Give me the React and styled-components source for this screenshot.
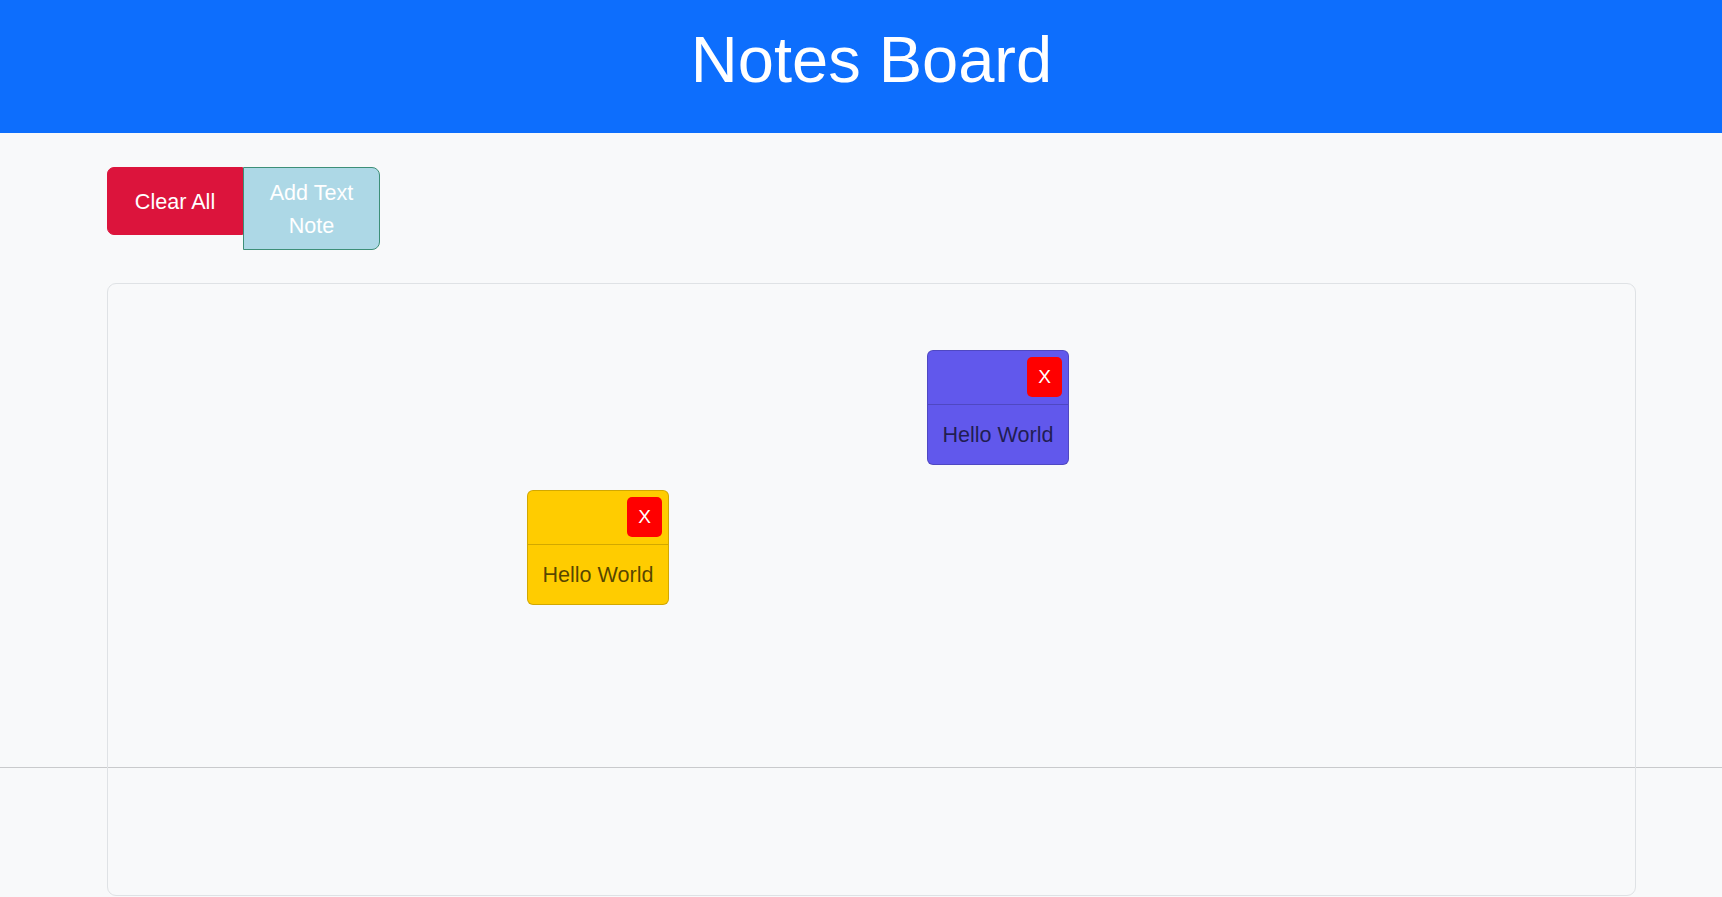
import React from "react";
import styled, { createGlobalStyle } from "styled-components";

const GlobalStyle = createGlobalStyle`
  html {
    overflow: hidden;
  }
  html, body {
    margin: 0;
    padding: 0;
    background: #f8f9fa;
    font-family: "Liberation Sans", Arial, sans-serif;
    color: #212529;
  }
  * { box-sizing: border-box; }
`;

const Header = styled.header`
  height: 133px;
  background: #0d6efd;
  padding: 22px 0 0 21px;
  text-align: center;
`;

const Title = styled.h1`
  margin: 0;
  font-size: 65px;
  line-height: 76.8px;
  font-weight: 400;
  color: #ffffff;
`;

const Main = styled.main`
  position: relative;
  z-index: 1;
  height: 634px;
  padding: 34px 0 0 107px;
`;

const Toolbar = styled.div`
  display: flex;
  align-items: flex-start;
`;

const ActionButton = styled.button`
  font-family: "Liberation Sans", Arial, sans-serif;
  font-size: 21.6px;
  line-height: 33px;
  color: #ffffff;
  cursor: pointer;
  border: 1px solid ${(p) => (p.$variant === "danger" ? "#dc143c" : "#3d8f78")};
  background: ${(p) => (p.$variant === "danger" ? "#dc143c" : "#add8e6")};
  width: ${(p) => (p.$variant === "danger" ? "136px" : "137px")};
  padding: ${(p) => (p.$variant === "danger" ? "17px 10px 16px" : "8px 16px 7px")};
  border-radius: ${(p) => (p.$variant === "danger" ? "7px 0 0 7px" : "0 8px 8px 0")};
`;

const Board = styled.section`
  position: relative;
  margin-top: 33px;
  width: 1529px;
  height: 613px;
  border: 1px solid #dfe2e5;
  border-radius: 9px;
  background: transparent;
`;

const Note = styled.div`
  position: absolute;
  width: 142px;
  height: 115px;
  background: ${(p) => p.$color};
  border: 1px solid rgba(0, 0, 0, 0.175);
  border-radius: 6px;
  display: flex;
  flex-direction: column;
`;

const NoteHeader = styled.div`
  display: flex;
  justify-content: flex-end;
  padding: 6px 6px 7px;
  border-bottom: 1px solid rgba(0, 0, 0, 0.175);
`;

const CloseButton = styled.button`
  width: 35px;
  height: 40px;
  border: none;
  border-radius: 5px;
  background: #ff0000;
  color: #ffffff;
  font-family: "Liberation Sans", Arial, sans-serif;
  font-size: 19px;
  padding: 0;
  cursor: pointer;
`;

const NoteBody = styled.div`
  padding: 14px 8px 13px;
  text-align: center;
  font-size: 21.6px;
  line-height: 32px;
  color: rgba(0, 0, 0, 0.68);
`;

const Footer = styled.footer`
  height: 130px;
  border-top: 1px solid #c9cacc;
`;

const notes = [
  { id: 1, color: "#6158ec", left: 819, top: 66, text: "Hello World" },
  { id: 2, color: "#ffcc00", left: 419, top: 206, text: "Hello World" },
];

export default function App() {
  return (
    <>
      <GlobalStyle />
      <Header>
        <Title>Notes Board</Title>
      </Header>
      <Main>
        <Toolbar>
          <ActionButton $variant="danger">Clear All</ActionButton>
          <ActionButton $variant="add">Add Text Note</ActionButton>
        </Toolbar>
        <Board>
          {notes.map((n) => (
            <Note key={n.id} $color={n.color} style={{ left: n.left, top: n.top }}>
              <NoteHeader>
                <CloseButton>X</CloseButton>
              </NoteHeader>
              <NoteBody>{n.text}</NoteBody>
            </Note>
          ))}
        </Board>
      </Main>
      <Footer />
    </>
  );
}
